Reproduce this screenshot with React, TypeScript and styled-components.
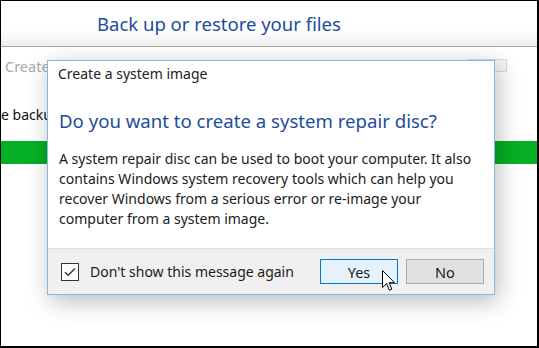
import React from 'react'
import styled, { createGlobalStyle } from 'styled-components'

const GlobalStyle = createGlobalStyle`
    * { box-sizing: border-box; }
    body {
        margin: 0;
        font-family: "Segoe UI", "Noto Sans", "Open Sans", sans-serif;
        background: #000;
    }
`

const Screen = styled.div`
    position: relative;
    width: 539px;
    height: 348px;
    overflow: hidden;
    background: #fff;
    border-style: solid;
    border-color: #000;
    border-width: 1px 2px 2px 1px;
`
const Header = styled.div`
    height: 46px;
    padding-left: 96px;
    display: flex;
    align-items: center;
    background: linear-gradient(#fff 0%, #fff 65%, #ededed 100%);
    border-bottom: 1px solid #a9a9a9;
`
const PageTitle = styled.h1`
    margin: 0;
    font-size: 18.5px;
    font-weight: 400;
    color: #1e4b9e;
`
const Content = styled.div`
    display: flex;
    flex-direction: column;
`
const LinkRow = styled.div`
    height: 38px;
    display: flex;
    align-items: center;
    justify-content: space-between;
    padding: 0 30px 0 4px;
`
const DisabledLink = styled.span`
    font-size: 14.5px;
    color: #a8a8a8;
`
const GhostBox = styled.div`
    width: 40px;
    height: 13px;
    margin-top: -2px;
    background: #f6f6f6;
    border: 1px solid #dcdcdc;
`
const InfoText = styled.div`
    margin-top: 20px;
    height: 22px;
    font-size: 14px;
    color: #111;
`
const ProgressBar = styled.div`
    margin-top: 14px;
    height: 23px;
    background: #06b025;
`

const Dialog = styled.div`
    position: absolute;
    left: 46px;
    top: 59px;
    width: 448px;
    height: 235px;
    display: flex;
    flex-direction: column;
    background: #fff;
    border: 1px solid #86b8e0;
    box-shadow: 3px 6px 22px rgba(0, 0, 0, 0.28);
`
const DialogTitle = styled.div`
    height: 36px;
    padding: 3px 0 0 10px;
    font-size: 14px;
    color: #222;
`
const DialogMain = styled.div`
    flex: 1;
    padding: 11px 11px 0 11px;
`
const Instruction = styled.h2`
    margin: 0;
    font-size: 18.6px;
    font-weight: 400;
    line-height: 26px;
    color: #1e4b9e;
`
const Body = styled.p`
    margin: 15px 0 0;
    font-size: 14px;
    line-height: 20px;
    color: #1b1b1b;
`
const Footer = styled.div`
    height: 46px;
    display: flex;
    align-items: center;
    padding: 0 10px 0 13px;
    background: #f0f0f0;
    border-top: 1px solid #dfdfdf;
`
const CheckLabel = styled.label`
    flex: 1;
    display: flex;
    align-items: center;
    gap: 11px;
    font-size: 14px;
    color: #1b1b1b;
`
const CheckBox = styled.span`
    width: 18px;
    height: 18px;
    display: flex;
    align-items: center;
    justify-content: center;
    background: #fff;
    border: 1px solid #333;
`
const Buttons = styled.div`
    display: flex;
    gap: 8px;
`
const Button = styled.button<{ $primary?: boolean }>`
    width: 78px;
    height: 25px;
    padding: 0;
    font-family: inherit;
    font-size: 14.5px;
    color: #1b1b1b;
    background: ${p => (p.$primary ? '#e5f1fb' : '#e1e1e1')};
    border: 1px solid ${p => (p.$primary ? '#0078d7' : '#adadad')};
`
const Cursor = styled.svg`
    position: absolute;
    left: 381px;
    top: 269px;
`

const App = () => {
    return (
        <>
            <GlobalStyle />
            <Screen>
                <Header>
                    <PageTitle>Back up or restore your files</PageTitle>
                </Header>
                <Content>
                    <LinkRow>
                        <DisabledLink>Create a system image</DisabledLink>
                        <GhostBox />
                    </LinkRow>
                    <InfoText>e backup</InfoText>
                    <ProgressBar />
                </Content>

                <Dialog>
                    <DialogTitle>Create a system image</DialogTitle>
                    <DialogMain>
                        <Instruction>Do you want to create a system repair disc?</Instruction>
                        <Body>
                            A system repair disc can be used to boot your computer. It also
                            contains Windows system recovery tools which can help you
                            recover Windows from a serious error or re-image your
                            computer from a system image.
                        </Body>
                    </DialogMain>
                    <Footer>
                        <CheckLabel>
                            <CheckBox>
                                <svg width="12" height="10" viewBox="0 0 12 10">
                                    <path d="M1 5.2 L4.2 8.3 L11 1.5" fill="none" stroke="#333" strokeWidth="1.3" />
                                </svg>
                            </CheckBox>
                            Don't show this message again
                        </CheckLabel>
                        <Buttons>
                            <Button $primary>Yes</Button>
                            <Button>No</Button>
                        </Buttons>
                    </Footer>
                </Dialog>

                <Cursor width="14" height="22" viewBox="0 0 14 22">
                    <path d="M0.5 0.5 V17.5 L4.6 13.6 L7.4 20.2 L9.8 19.2 L7.1 12.7 H12.5 Z" fill="#fff" stroke="#000" strokeWidth="1" strokeLinejoin="miter" />
                </Cursor>
            </Screen>
        </>
    )
}

export default App
